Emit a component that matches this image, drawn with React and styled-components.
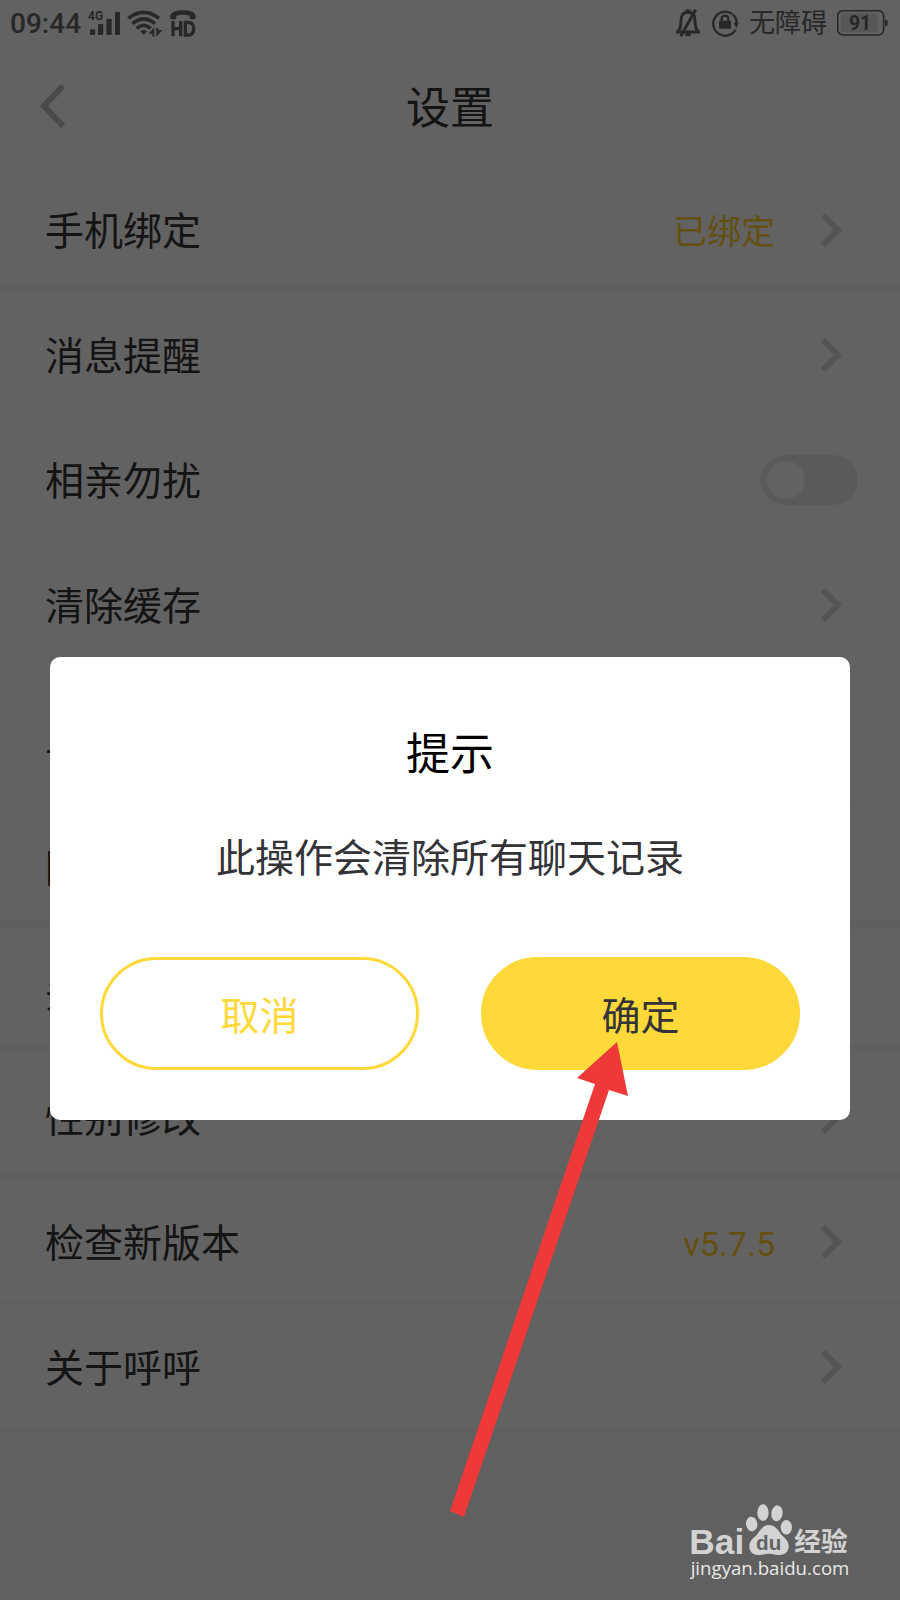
import React, { useState } from 'react'
import styled, { createGlobalStyle } from 'styled-components'

const colors = {
	yellow: '#ffd83a',
	value: '#ffcf2e',
	text: '#343434',
	status: '#686868',
	divider: '#f6f6f6',
	arrow: '#ef3838',
}

const rows = [
	{ label: '手机绑定', value: '已绑定', divider: 9 },
	{ label: '消息提醒', divider: 2 },
	{ label: '相亲勿扰', toggle: true, divider: 2 },
	{ label: '清除缓存', divider: 2 },
	{ label: '上传日志', divider: 2, tall: true },
	{ label: '隐私设置', divider: 9 },
	{ label: '头像修改', divider: 9 },
	{ label: '性别修改', divider: 9 },
	{ label: '检查新版本', value: 'v5.7.5', divider: 2 },
	{ label: '关于呼呼', divider: 2 },
]

const SignalIcon = () => (
	<svg width="32" height="26" viewBox="264 28 96 78" fill={colors.status} aria-hidden="true">
		<text x="264" y="59" fontFamily="Roboto, sans-serif" fontWeight="700" fontSize="36">4G</text>
		<rect x="270" y="86" width="16" height="17" rx="4" />
		<rect x="294" y="70" width="16" height="33" rx="4" />
		<rect x="319" y="54" width="16" height="49" rx="4" />
		<rect x="345" y="33" width="15" height="70" rx="4" />
	</svg>
)

const WifiIcon = () => (
	<svg width="36" height="27" viewBox="385 28 108 81" fill="none" stroke={colors.status} strokeWidth="11" aria-hidden="true">
		<path d="M389 53 Q435 17 481 53" />
		<path d="M401 69 Q435 41 469 69" />
		<path d="M414 83 Q435 65 456 83" />
		<path d="M424 92 Q435 82 446 92 L435 102Z" fill={colors.status} stroke="none" />
		<path d="M449 99 L467 80 V108 H461 V99Z M472 82 H479 V88 H492 L473 108Z" fill={colors.status} stroke="none" />
	</svg>
)

const HdIcon = () => (
	<svg width="26" height="27" viewBox="509 26 78 81" fill={colors.status} aria-hidden="true">
		<path d="M510 51 V44 Q512 27 548 27 Q584 27 586 44 V51 Q586 54 582 54 H571 Q568 54 568 50 V43 Q548 37 528 43 V50 Q528 54 524 54 H514 Q510 54 510 51Z" />
		<path d="M518 59 V105 M541 59 V105 M518 82 H541 M555 63 V101 H563 Q580 101 580 82 Q580 63 563 63Z" fill="none" stroke={colors.status} strokeWidth="10" />
	</svg>
)

const BellOffIcon = () => (
	<svg width="26" height="28" viewBox="43 25 78 84" fill="none" stroke={colors.status} strokeWidth="9" aria-hidden="true">
		<path d="M46 94 H118 M52 92 Q61 82 61 60 Q61 35 82 35 Q103 35 103 60 Q103 82 112 92" />
		<path d="M82 26 V35" strokeWidth="14" />
		<path d="M105 27 L60 107" />
		<path d="M74 102 H90" />
	</svg>
)

const RotationLockIcon = () => (
	<svg width="28" height="28" viewBox="148 26 84 84" fill="none" stroke={colors.status} strokeWidth="7" aria-hidden="true">
		<path d="M222 88 A36 36 0 1 1 212 41 M214 43 Q225 54 225 70" />
		<path d="M215 67 H231 L225 84Z" fill={colors.status} stroke="none" />
		<rect x="172" y="61" width="36" height="24" rx="3" fill={colors.status} stroke="none" />
		<path d="M180 63 V56 Q180 46 190 46 Q200 46 200 56 V63" />
	</svg>
)

const BatteryIcon = () => (
	<svg width="51" height="26" viewBox="531 29 153 78" role="img" aria-label="91%">
		<rect x="533" y="31" width="138" height="73" rx="16" fill="none" stroke={colors.status} strokeWidth="5" />
		<rect x="543" y="39" width="109" height="57" rx="6" fill="#e2e2e2" />
		<path d="M675 58 h3 q5 0 5 5 v9 q0 5 -5 5 h-3z" fill={colors.status} />
		<text x="600" y="89" textAnchor="middle" fontFamily="Roboto, sans-serif" fontWeight="700" fontSize="58" fill={colors.status}>91</text>
	</svg>
)

const Chevron = () => (
	<svg width="22" height="36" viewBox="0 0 22 36" fill="none" stroke="#dadada" strokeWidth="6" aria-hidden="true">
		<path d="M3 3 L18 18 L3 33" />
	</svg>
)

const Logo = () => (
	<svg width="163" height="80" viewBox="60 65 489 240" fill="#d3d3d3" role="img" aria-label="Baidu 经验">
		<text x="58" y="220" fontFamily="'Liberation Sans', sans-serif" fontWeight="700" fontSize="106">Bai</text>
		<ellipse cx="245" cy="131" rx="17" ry="22" transform="rotate(-8 245 131)" />
		<ellipse cx="279" cy="97" rx="17" ry="25" />
		<ellipse cx="321" cy="99" rx="17" ry="24" transform="rotate(8 321 99)" />
		<ellipse cx="349" cy="141" rx="17" ry="22" />
		<path d="M297 134 C314 134 323 147 332 160 C341 172 356 178 356 198 C356 216 343 225 325 224 C314 223 307 220 297 220 C287 220 280 223 269 224 C250 225 238 216 238 198 C238 178 254 172 263 160 C272 147 281 134 297 134Z" />
		<text x="296" y="209" textAnchor="middle" fontFamily="'Liberation Sans', sans-serif" fontWeight="700" fontSize="62" fill="#626262">du</text>
		<text x="373" y="212" fontFamily="'Noto Sans CJK SC', sans-serif" fontWeight="700" fontSize="80">经验</text>
		<text x="62" y="284" fontFamily="'Open Sans', sans-serif" fontWeight="500" fontSize="56" fill="#e8e8e8">jingyan.baidu.com</text>
	</svg>
)

const App = () => {
	const [quiet, setQuiet] = useState(false)
	const [open, setOpen] = useState(true)

	return (
		<Screen>
			<GlobalStyle />
			<StatusBar>
				<StatusGroup $gap={7}>
					<Time>09:44</Time>
					<SignalIcon />
					<WifiIcon />
					<HdIcon />
				</StatusGroup>
				<StatusGroup $gap={10}>
					<BellOffIcon />
					<RotationLockIcon />
					<span>无障碍</span>
					<BatteryIcon />
				</StatusGroup>
			</StatusBar>
			<Header>
				<BackButton type="button" aria-label="返回">
					<svg width="26" height="44" viewBox="0 0 26 44" fill="none" stroke="#c0c0c0" strokeWidth="6">
						<path d="M23 2 L4 22 L23 42" />
					</svg>
				</BackButton>
				<Title>设置</Title>
			</Header>
			<List>
				{rows.map(({ label, value, toggle, divider, tall }) => (
					<Item key={label} $divider={divider}>
						{toggle ? (
							<ToggleRow>
								<Label>{label}</Label>
								<Switch type="checkbox" checked={quiet} onChange={() => setQuiet(!quiet)} />
							</ToggleRow>
						) : (
							<RowButton type="button" $tall={tall} onClick={() => setOpen(true)}>
								<Label>{label}</Label>
								{value && <Value>{value}</Value>}
								<Chevron />
							</RowButton>
						)}
					</Item>
				))}
			</List>
			{open && (
				<Overlay>
					<Dialog role="dialog" aria-labelledby="dialog-title">
						<DialogTitle id="dialog-title">提示</DialogTitle>
						<Message>此操作会清除所有聊天记录</Message>
						<Actions>
							<ActionButton type="button" onClick={() => setOpen(false)}>取消</ActionButton>
							<ActionButton type="button" $primary onClick={() => setOpen(false)}>确定</ActionButton>
						</Actions>
						<Arrow width="180" height="477" viewBox="450 1042 180 477" fill={colors.arrow} aria-hidden="true">
							<path d="M617 1042 L628 1096 L609 1090 L464 1517 L450 1511 L595 1084 L577 1078Z" />
						</Arrow>
					</Dialog>
				</Overlay>
			)}
			<Watermark>
				<Logo />
			</Watermark>
		</Screen>
	)
}

const GlobalStyle = createGlobalStyle`
	* {
		box-sizing: border-box;
	}
	body {
		margin: 0;
		background: #fafafa;
	}
	button {
		font-family: inherit;
		border: none;
		background: none;
		padding: 0;
		cursor: pointer;
	}
	svg {
		display: block;
		flex-shrink: 0;
	}
`
const Screen = styled.div`
	position: relative;
	min-height: 100vh;
	font-family: Roboto, 'Noto Sans CJK SC', sans-serif;
	color: ${colors.text};
`
const StatusBar = styled.div`
	display: flex;
	justify-content: space-between;
	align-items: center;
	height: 46px;
	padding: 0 12px 0 10px;
	background: white;
	color: ${colors.status};
	font-size: 26px;
	line-height: 40px;
`
const StatusGroup = styled.div`
	display: flex;
	align-items: center;
	gap: ${props => props.$gap}px;
`
const Time = styled.span`
	padding-top: 2px;
	font-size: 28px;
	font-weight: 500;
`
const Header = styled.header`
	display: grid;
	grid-template-columns: 60px 1fr 60px;
	align-items: center;
	height: 121px;
	padding: 0 40px;
	background: white;
	border-bottom: 2px solid ${colors.divider};
`
const BackButton = styled.button`
	width: 60px;
	height: 60px;
	display: flex;
	align-items: center;
`
const Title = styled.h1`
	margin: 0;
	padding-top: 6px;
	text-align: center;
	font-size: 44px;
	font-weight: 400;
	line-height: 60px;
`
const List = styled.ul`
	list-style: none;
	margin: 0;
	padding: 0;
`
const Item = styled.li`
	background: white;
	box-shadow: inset 0 -${props => props.$divider}px 0 ${colors.divider};
`
const RowButton = styled.button`
	display: flex;
	align-items: center;
	width: 100%;
	height: ${props => props.$tall ? '137px' : '125px'};
	padding: 0 58px 0 45px;
	color: inherit;
	text-align: left;
`
const ToggleRow = styled.label`
	display: flex;
	align-items: center;
	height: 125px;
	padding: 0 42px 0 45px;
`
const Label = styled.span`
	flex: 1;
	padding-top: 4px;
	font-size: 39px;
	line-height: 56px;
`
const Value = styled.span`
	margin-right: 45px;
	padding-top: 4px;
	color: ${colors.value};
	font-size: 34px;
	line-height: 56px;
`
const Switch = styled.input`
	appearance: none;
	display: flex;
	align-items: center;
	width: 98px;
	height: 50px;
	margin: 0;
	padding: 0 7px;
	border-radius: 25px;
	background: ${props => props.checked ? colors.yellow : '#ebebeb'};
	&::before {
		content: '';
		width: 38px;
		height: 38px;
		margin-left: ${props => props.checked ? 'auto' : 0};
		border-radius: 50%;
		background: white;
	}
`
const Overlay = styled.div`
	position: absolute;
	inset: 0;
	display: flex;
	align-items: center;
	padding: 177px 50px 0;
	background: rgba(0, 0, 0, 0.615);
`
const Dialog = styled.div`
	position: relative;
	flex: 1;
	padding: 66px 50px 50px;
	border-radius: 10px;
	background: white;
	text-align: center;
`
const DialogTitle = styled.h2`
	margin: 0;
	color: black;
	font-size: 44px;
	font-weight: 400;
	line-height: 64px;
`
const Message = styled.p`
	margin: 44px 0 70px;
	color: #333338;
	font-size: 39px;
	line-height: 56px;
`
const Actions = styled.div`
	display: flex;
	gap: 62px;
`
const ActionButton = styled.button`
	flex: 1;
	height: 113px;
	border-radius: 57px;
	font-size: 39px;
	line-height: 56px;
	color: ${props => props.$primary ? '#333338' : colors.yellow};
	&& {
		padding-top: 7px;
		border: 3px solid ${colors.yellow};
		background: ${props => props.$primary ? colors.yellow : 'white'};
	}
`
const Arrow = styled.svg`
	position: absolute;
	left: 50%;
	top: 385px;
	pointer-events: none;
`
const Watermark = styled.div`
	position: absolute;
	right: 47px;
	bottom: 18px;
`

export default App
